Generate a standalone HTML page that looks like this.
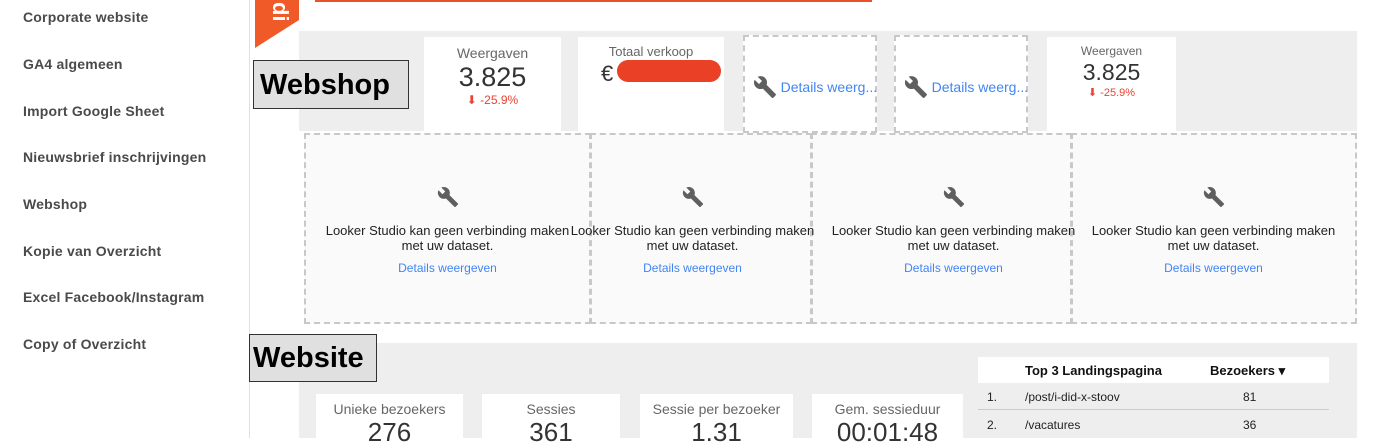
<!DOCTYPE html>
<html><head><meta charset="utf-8"><style>
*{margin:0;padding:0;box-sizing:border-box}
body{width:1400px;height:438px;overflow:hidden;background:#fff;font-family:"Liberation Sans",Arial,sans-serif;position:relative}
.a{position:absolute}
.side{left:0;top:0;width:250px;height:438px;border-right:1px solid #e0e0e0}
.nav{position:absolute;left:23px;font-size:14px;color:#4a4a4a;font-weight:bold;letter-spacing:.2px}
.card{position:absolute;background:#fff;text-align:center;color:#333}
.lbl{font-size:13px;color:#666}
.red{color:#ea4335}
.err{position:absolute;background:#fafafa;border:2px dashed #c8c8c8;text-align:center;font-size:13px;color:#222}
.lnk{color:#4285f4}
svg.w{display:inline-block;vertical-align:middle}
</style></head><body>
<svg width="0" height="0" style="position:absolute"><defs><symbol id="wr" viewBox="0 0 24 24"><path d="M22.7 19l-9.1-9.1c.9-2.3.4-5-1.5-6.9-2-2-5-2.4-7.4-1.3L9 6 6 9 1.6 4.7C.4 7.1.9 10.1 2.9 12.1c1.9 1.9 4.6 2.4 6.9 1.5l9.1 9.1c.4.4 1 .4 1.4 0l2.3-2.3c.5-.4.5-1.1.1-1.4z" fill="#5f5f5f"/></symbol></defs></svg>
<div class="a side">
<div class="nav" style="top:9px">Corporate website</div>
<div class="nav" style="top:56px">GA4 algemeen</div>
<div class="nav" style="top:103px">Import Google Sheet</div>
<div class="nav" style="top:149px">Nieuwsbrief inschrijvingen</div>
<div class="nav" style="top:196px">Webshop</div>
<div class="nav" style="top:243px">Kopie van Overzicht</div>
<div class="nav" style="top:289px">Excel Facebook/Instagram</div>
<div class="nav" style="top:336px">Copy of Overzicht</div>
</div>
<svg class="a" style="left:255px;top:0" width="45" height="48"><polygon points="0,0 44,0 44,20 0,48" fill="#f05a28"/><text x="18" y="2" fill="#fff" font-size="22" font-weight="bold" transform="rotate(90 18 2)">di</text></svg>
<div class="a" style="left:315px;top:0;width:557px;height:2px;background:#e8532b"></div>
<div class="a" style="left:299px;top:31px;width:1058px;height:100px;background:#eeeeee"></div>
<div class="a" style="left:253px;top:60px;width:156px;height:49px;background:#e0e0e0;border:1px solid #333;font-size:29px;font-weight:bold;color:#000;padding:8px 0 0 6px">Webshop</div>
<div class="card" style="left:424px;top:37px;width:137px;height:96px"><div class="lbl" style="margin-top:8px;font-size:14px">Weergaven</div><div style="font-size:27px;line-height:32px">3.825</div><div class="red" style="font-size:12px">⬇ -25.9%</div></div>
<div class="card" style="left:578px;top:37px;width:146px;height:96px"><div class="lbl" style="margin-top:7px">Totaal verkoop</div><div style="font-size:22px;text-align:left;padding-left:23px;margin-top:2px">€</div></div>
<div class="a" style="left:617px;top:60px;width:104px;height:22px;background:#ea4026;border-radius:11px"></div>
<div class="err" style="left:743px;top:35px;width:134px;height:98px;background:#fff;text-align:left;padding:38px 0 0 8px;white-space:nowrap"><svg class="w" width="24" height="24"><use href="#wr"/></svg> <span class="lnk" style="font-size:14px;vertical-align:middle">Details weerg...</span></div>
<div class="err" style="left:894px;top:35px;width:134px;height:98px;background:#fff;text-align:left;padding:38px 0 0 8px;white-space:nowrap"><svg class="w" width="24" height="24"><use href="#wr"/></svg> <span class="lnk" style="font-size:14px;vertical-align:middle">Details weerg...</span></div>
<div class="card" style="left:1047px;top:37px;width:129px;height:96px"><div class="lbl" style="margin-top:7px;font-size:12px">Weergaven</div><div style="font-size:23px;line-height:28px">3.825</div><div class="red" style="font-size:11px">⬇ -25.9%</div></div>
<div class="err" style="left:304px;top:133px;width:287px;height:191px"></div>
<div class="err" style="left:590px;top:133px;width:222px;height:191px"></div>
<div class="err" style="left:811px;top:133px;width:261px;height:191px"></div>
<div class="err" style="left:1071px;top:133px;width:286px;height:191px"></div>
<div class="a" style="left:304px;top:186px;width:287px;text-align:center;font-size:13px;color:#222"><svg width="22" height="22"><use href="#wr"/></svg><div style="margin-top:12px;line-height:15px;white-space:nowrap">Looker Studio kan geen verbinding maken<br>met uw dataset.</div><div class="lnk" style="margin-top:8px;font-size:12px">Details weergeven</div></div>
<div class="a" style="left:549px;top:186px;width:287px;text-align:center;font-size:13px;color:#222"><svg width="22" height="22"><use href="#wr"/></svg><div style="margin-top:12px;line-height:15px;white-space:nowrap">Looker Studio kan geen verbinding maken<br>met uw dataset.</div><div class="lnk" style="margin-top:8px;font-size:12px">Details weergeven</div></div>
<div class="a" style="left:810px;top:186px;width:287px;text-align:center;font-size:13px;color:#222"><svg width="22" height="22"><use href="#wr"/></svg><div style="margin-top:12px;line-height:15px;white-space:nowrap">Looker Studio kan geen verbinding maken<br>met uw dataset.</div><div class="lnk" style="margin-top:8px;font-size:12px">Details weergeven</div></div>
<div class="a" style="left:1070px;top:186px;width:287px;text-align:center;font-size:13px;color:#222"><svg width="22" height="22"><use href="#wr"/></svg><div style="margin-top:12px;line-height:15px;white-space:nowrap">Looker Studio kan geen verbinding maken<br>met uw dataset.</div><div class="lnk" style="margin-top:8px;font-size:12px">Details weergeven</div></div>
<div class="a" style="left:299px;top:343px;width:1058px;height:95px;background:#eeeeee"></div>
<div class="a" style="left:249px;top:334px;width:128px;height:48px;background:#e0e0e0;border:1px solid #333;font-size:29px;font-weight:bold;color:#000;padding:7px 0 0 3px">Website</div>
<div class="card" style="left:316px;top:394px;width:147px;height:50px"><div class="lbl" style="margin-top:7px;font-size:14px">Unieke bezoekers</div><div style="font-size:26px">276</div></div>
<div class="card" style="left:482px;top:394px;width:138px;height:50px"><div class="lbl" style="margin-top:7px;font-size:14px">Sessies</div><div style="font-size:26px">361</div></div>
<div class="card" style="left:640px;top:394px;width:153px;height:50px"><div class="lbl" style="margin-top:7px;font-size:14px">Sessie per bezoeker</div><div style="font-size:26px">1.31</div></div>
<div class="card" style="left:812px;top:394px;width:151px;height:50px"><div class="lbl" style="margin-top:7px;font-size:14px">Gem. sessieduur</div><div style="font-size:26px">00:01:48</div></div>
<div class="a" style="left:978px;top:357px;width:351px;height:26px;background:#fff;font-size:13px;font-weight:bold;color:#111"><span class="a" style="left:47px;top:6px">Top 3 Landingspagina</span><span class="a" style="left:232px;top:6px">Bezoekers ▾</span></div>
<div class="a" style="left:978px;top:385px;width:351px;height:25px;font-size:12px;color:#222;border-bottom:1px solid #ccc"><span class="a" style="left:9px;top:5px">1.</span><span class="a" style="left:47px;top:5px">/post/i-did-x-stoov</span><span class="a" style="left:265px;top:5px">81</span></div>
<div class="a" style="left:978px;top:413px;width:351px;height:25px;font-size:12px;color:#222"><span class="a" style="left:9px;top:5px">2.</span><span class="a" style="left:47px;top:5px">/vacatures</span><span class="a" style="left:265px;top:5px">36</span></div>
</body></html>
